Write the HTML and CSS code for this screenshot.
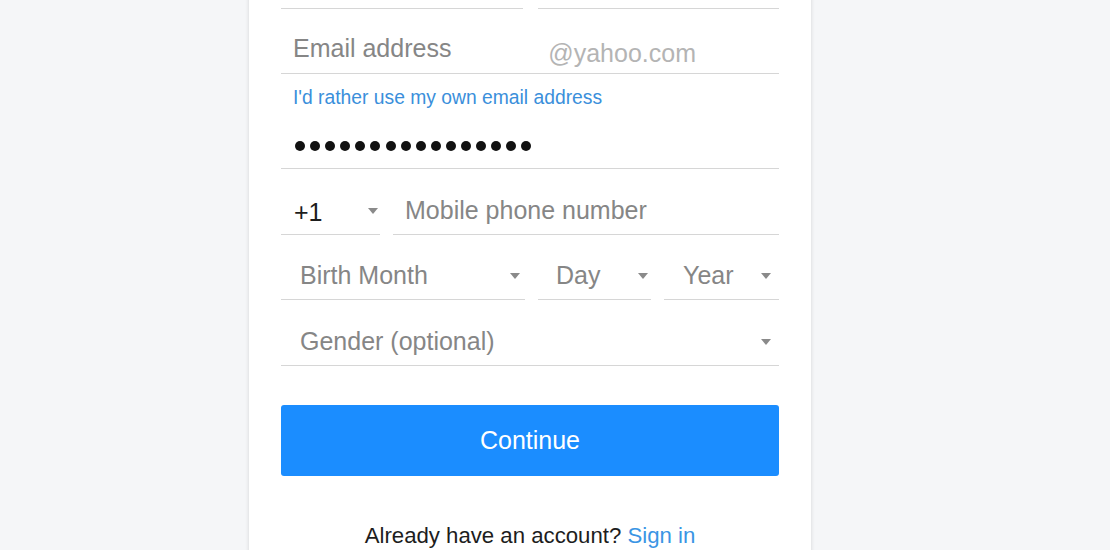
FILE: index.html
```html
<!DOCTYPE html>
<html lang="en">
<head>
<meta charset="utf-8">
<title>Sign up</title>
<link rel="stylesheet" href="styles.css">
</head>
<body>
<main class="card">
  <div class="row two">
    <div class="field"></div>
    <div class="field"></div>
  </div>

  <div class="field email">
    <span class="ph">Email address</span>
    <span class="domain">@yahoo.com</span>
  </div>
  <a class="own" href="#">I'd rather use my own email address</a>

  <div class="field pass">
    <div class="dots">
      <i></i><i></i><i></i><i></i><i></i><i></i><i></i><i></i>
      <i></i><i></i><i></i><i></i><i></i><i></i><i></i><i></i>
    </div>
  </div>

  <div class="row phone">
    <div class="field select country"><span class="val">+1</span><span class="caret"></span></div>
    <div class="field"><span class="ph">Mobile phone number</span></div>
  </div>

  <div class="row birth">
    <div class="field select month"><span class="ph">Birth Month</span><span class="caret"></span></div>
    <div class="field select day"><span class="ph">Day</span><span class="caret"></span></div>
    <div class="field select year"><span class="ph">Year</span><span class="caret"></span></div>
  </div>

  <div class="field select gender"><span class="ph">Gender (optional)</span><span class="caret"></span></div>

  <button class="continue" type="button">Continue</button>

  <p class="signin">Already have an account? <a href="#">Sign in</a></p>
</main>
</body>
</html>
```

FILE: styles.css
```css
* { box-sizing: border-box; }

html, body {
  margin: 0;
  padding: 0;
  height: 100%;
  overflow: hidden;
}

body {
  background: #f5f6f8;
  font-family: "Liberation Sans", Arial, sans-serif;
  color: #1d1d1d;
}

.card {
  width: 562px;
  margin: -56px 0 0 249px;
  padding: 0 32px 40px;
  background: #fff;
  box-shadow: 0 0 4px rgba(0, 0, 0, 0.14);
  min-height: 700px;
}

.row {
  display: grid;
  column-gap: 13px;
}
.row.two { grid-template-columns: 1fr 1fr; column-gap: 15px; }
.row.phone { grid-template-columns: 99px 1fr; }
.row.birth { grid-template-columns: 244px 113px 1fr; }

.field {
  height: 65px;
  border-bottom: 1px solid #d6d6d6;
  display: flex;
  align-items: flex-end;
  padding: 0 12px 10px;
  font-size: 25px;
  line-height: 28px;
}

.phone .field, .gender { height: 66px; }

.ph { color: #868686; }

.email { justify-content: space-between; padding-right: 83px; }
.email .ph { position: relative; top: -1px; }
.domain { color: #b4b4b4; position: relative; top: 4px; }

.own {
  display: block;
  margin-top: 12px;
  height: 24px;
  line-height: 24px;
  font-size: 19.3px;
  color: #3a8fdb;
  text-decoration: none;
  padding-left: 12px;
}

.pass { height: 59px; padding-left: 14px; padding-bottom: 8px; }
.dots {
  display: flex;
  gap: 5.1px;
  height: 28px;
  align-items: center;
}
.dots i {
  display: block;
  width: 10px;
  height: 10px;
  border-radius: 50%;
  background: #111;
}

.select {
  justify-content: space-between;
  padding-left: 19px;
  padding-right: 5px;
}
.country { padding-left: 13px; padding-right: 2px; }
.country .val { color: #1d1d1d; position: relative; top: 2px; }
.day { padding-left: 18px; padding-right: 3px; }
.year, .gender { padding-right: 8px; }

.caret {
  width: 0;
  height: 0;
  border-left: 5.5px solid transparent;
  border-right: 5.5px solid transparent;
  border-top: 6px solid #8a8a8a;
  align-self: center;
  margin-top: 28px;
}

.continue {
  display: block;
  width: 100%;
  height: 71px;
  margin-top: 39px;
  border: 0;
  border-radius: 3px;
  background: #1b8dff;
  color: #fff;
  font-family: inherit;
  font-size: 25px;
}

.signin {
  margin: 46px 0 0;
  text-align: center;
  font-size: 22.2px;
  line-height: 28px;
  color: #1d1d1d;
}
.signin a { color: #3a95e4; text-decoration: none; }
```
